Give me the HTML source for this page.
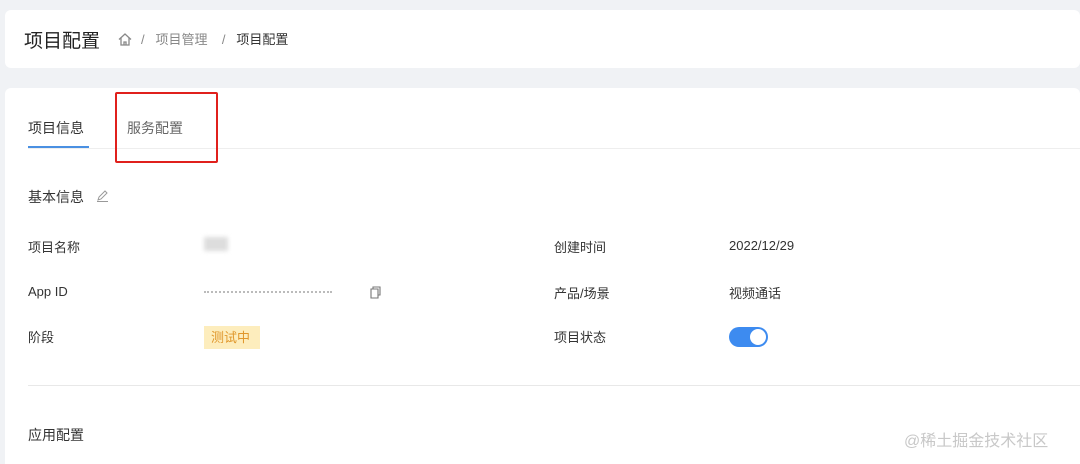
<!DOCTYPE html>
<html><head><meta charset="utf-8"><style>
*{margin:0;padding:0;box-sizing:border-box}
html,body{width:1080px;height:464px;overflow:hidden}
body{background:#f0f2f5;font-family:"Liberation Sans","Noto Sans CJK SC",sans-serif;position:relative;color:#333}
.a{position:absolute;white-space:nowrap}
.card{position:absolute;background:#fff;border-radius:6px}
</style></head><body>
<div class="card" style="left:5px;top:10px;width:1075px;height:58px"></div>
<div class="a" style="left:24px;top:26px;font-size:19px;color:#222">项目配置</div>
<svg class="a" style="left:117px;top:32px" width="16" height="15" viewBox="0 0 16 15"><path d="M2 7.5L8 2l6 5.5M4 6v7h8V6M7 13v-3h2v3" fill="none" stroke="#888" stroke-width="1.3"/></svg>
<div class="a" style="left:141px;top:29px;font-size:13px;color:#888">/&nbsp;&nbsp;&nbsp;项目管理&nbsp;&nbsp;&nbsp;&nbsp;/&nbsp;&nbsp;&nbsp;<span style="color:#333">项目配置</span></div>
<div class="card" style="left:5px;top:88px;width:1075px;height:376px;border-radius:6px 6px 0 0"></div>
<div class="a" style="left:28px;top:118px;font-size:14px;color:#333">项目信息</div>
<div class="a" style="left:28px;top:146px;width:61px;height:2px;background:#4a90e2"></div>
<div class="a" style="left:127px;top:118px;font-size:14px;color:#666">服务配置</div>
<div class="a" style="left:28px;top:148px;width:1052px;height:1px;background:#eee"></div>
<div class="a" style="left:115px;top:92px;width:103px;height:71px;border:2px solid #e0201c;border-radius:2px"></div>
<div class="a" style="left:28px;top:187px;font-size:14px">基本信息</div>
<svg class="a" style="left:96px;top:189px" width="13" height="13" viewBox="0 0 13 13"><path d="M2 11l1-3 6-6 2 2-6 6zM1 12.5h11" fill="none" stroke="#999" stroke-width="1"/></svg>
<div class="a" style="left:28px;top:237px;font-size:13px">项目名称</div>
<div class="a" style="left:204px;top:237px;width:24px;height:14px;background:#ddd;filter:blur(2px)"></div>
<div class="a" style="left:28px;top:284px;font-size:13px">App ID</div>
<div class="a" style="left:204px;top:291px;width:128px;height:0;border-top:2px dotted #bbb"></div>
<svg class="a" style="left:370px;top:286px" width="12" height="13" viewBox="0 0 12 13"><path d="M3 3V1h7v8H8M1 3h7v9H1z" fill="none" stroke="#777" stroke-width="1.1"/></svg>
<div class="a" style="left:28px;top:327px;font-size:13px">阶段</div>
<div class="a" style="left:204px;top:326px;width:56px;height:23px;background:#fdedbd;color:#e0972c;font-size:13px;padding:1px 0 0 7px">测试中</div>
<div class="a" style="left:554px;top:237px;font-size:13px">创建时间</div>
<div class="a" style="left:729px;top:238px;font-size:13px">2022/12/29</div>
<div class="a" style="left:554px;top:283px;font-size:13px">产品/场景</div>
<div class="a" style="left:729px;top:283px;font-size:13px">视频通话</div>
<div class="a" style="left:554px;top:327px;font-size:13px">项目状态</div>
<div class="a" style="left:729px;top:327px;width:39px;height:20px;background:#3d8bf0;border-radius:10px"><div style="position:absolute;right:2px;top:2px;width:16px;height:16px;border-radius:50%;background:#fff"></div></div>
<div class="a" style="left:28px;top:385px;width:1052px;height:1px;background:#e8e8e8"></div>
<div class="a" style="left:28px;top:425px;font-size:14px">应用配置</div>
<div class="a" style="left:904px;top:427px;font-size:16px;color:#c8c8c8">@稀土掘金技术社区</div>
</body></html>
